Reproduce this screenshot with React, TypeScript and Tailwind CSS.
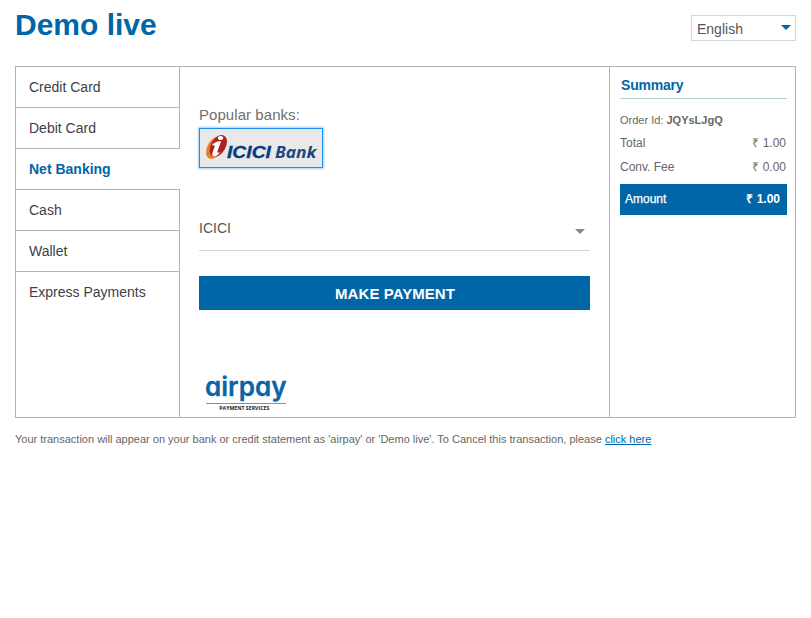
const methods = ['Credit Card', 'Debit Card', 'Net Banking', 'Cash', 'Wallet', 'Express Payments'];

function BankLogo() {
  return (
    <svg width="122" height="38" viewBox="0 0 122 38" className="block">
      <g transform="rotate(30 17 18)">
        <ellipse cx="15.6" cy="19.6" rx="7.6" ry="12.2" fill="#ee7d24" />
        <ellipse cx="17.6" cy="16.4" rx="7.4" ry="11.8" fill="#ae2226" />
      </g>
      <ellipse cx="20.6" cy="9" rx="2.7" ry="2.1" fill="#fff" />
      <path d="M11.8 16.2 Q15.5 12 21 12.4 L17.4 22.5 Q17 24.8 20 23 Q17 28 13.8 27.4 Q11.4 26.7 12.6 23.5 L15 16.6 Z" fill="#fff" />
      <text x="27" y="29.4" fontFamily="Liberation Sans, Arial, sans-serif" fontSize="16" fontWeight="700" fontStyle="italic" fill="#053c7d" stroke="#053c7d" strokeWidth="0.3" textLength="44" lengthAdjust="spacingAndGlyphs">ICICI</text>
      <text x="75" y="29.2" fontFamily="Open Sans, sans-serif" fontSize="15.5" fontWeight="700" fontStyle="italic" fill="#1a4682" textLength="41.5" lengthAdjust="spacingAndGlyphs">Bank</text>
    </svg>
  );
}

function AirpayLogo() {
  return (
    <svg width="84" height="46" viewBox="0 0 84 46" className="block overflow-visible">
      <text x="0" y="25.5" fontFamily="Inter, sans-serif" fontSize="26" fontWeight="600" fill="#0765a8" stroke="#0765a8" strokeWidth="0.3" textLength="81.5" lengthAdjust="spacingAndGlyphs" className="[font-feature-settings:'cv11']">airpay</text>
      <path d="M1 33.5H81" stroke="#8c8c8c" />
      <text x="14.3" y="40.3" fontFamily="Open Sans, sans-serif" fontSize="5.6" fontWeight="700" fill="#222" textLength="50" lengthAdjust="spacingAndGlyphs">PAYMENT SERVICES</text>
    </svg>
  );
}

export default function App() {
  return (
    <div className="min-h-[618px] bg-white pr-[15px] pl-[15px] font-['Liberation_Sans',Arial,sans-serif] text-[#666]">
      <header className="flex h-[66px] items-start justify-between">
        <h1 className="mt-2 text-[30px] leading-[34px] font-bold text-[#0066a7]">Demo live</h1>
        <button className="mt-[15px] flex h-[26px] w-[105px] items-center justify-between border border-[#cfdadf] pt-0.5 pr-1 pl-[5px] text-sm leading-5 text-[#555]">
          English
          <svg width="10" height="5" viewBox="0 0 10 5" className="-mt-[3px]"><path d="M0 0H10L5 5Z" fill="#0066a7" /></svg>
        </button>
      </header>

      <main className="flex h-[352px] border border-[#b3b3b3]">
        <nav className="flex w-[164px] shrink-0 flex-col text-sm text-[#404048]">
          {methods.map((name) => (
            <div
              key={name}
              className={
                name === 'Net Banking'
                  ? 'h-[41px] border-b border-[#b3b3b3] pl-[13px] leading-10 font-bold text-[#0066a7]'
                  : name === 'Express Payments'
                    ? 'grow border-r border-[#b3b3b3] pl-[13px] leading-10'
                    : 'h-[41px] border-r border-b border-[#b3b3b3] pl-[13px] leading-10'
              }
            >
              {name}
            </div>
          ))}
        </nav>

        <section className="flex w-[429px] shrink-0 flex-col pr-[19px] pl-[19px]">
          <h2 className="mt-[38px] text-[15px] leading-5 tracking-[0.06px] text-[#707070]">Popular banks:</h2>
          <button className="mt-[3px] h-10 w-[124px] border border-[#1c8ef0] bg-[#e9e9e9] shadow-[0_0_2px_1px_#9fd0f8]">
            <BankLogo />
          </button>
          <div className="mt-[38px] flex h-[45px] items-start justify-between border-b border-[#cfd8dc] pr-[5px] text-sm leading-5 text-[#555]">
            <span className="mt-3">ICICI</span>
            <svg width="10" height="5" viewBox="0 0 10 5" className="mt-[23px]"><path d="M0 0H10L5 5Z" fill="#7f8c8f" /></svg>
          </div>
          <button className="mt-[25px] h-[34px] bg-[#0066a7] pt-px pl-px text-[15px] leading-5 font-bold tracking-[0.06px] text-white">MAKE PAYMENT</button>
          <div className="mt-[60px] ml-1.5"><AirpayLogo /></div>
        </section>

        <aside className="grow border-l border-[#b3b3b3] pr-2 pl-2.5 text-xs">
          <h2 className="h-8 border-b border-[#b8cdd2] pt-2 pl-px text-sm leading-5 font-bold tracking-[-0.2px] text-[#0066a7]">Summary</h2>
          <p className="mt-[13px] text-[11px] leading-4">Order Id: <b>JQYsLJgQ</b></p>
          <div className="mt-[7px] flex justify-between pr-px leading-4"><span>Total</span><span>₹ 1.00</span></div>
          <div className="mt-2 flex justify-between pr-px leading-4"><span>Conv. Fee</span><span>₹ 0.00</span></div>
          <div className="mt-[9px] flex h-[31px] items-center justify-between bg-[#0066a7] pr-[7px] pb-0.5 pl-[5px] text-white"><span className="[-webkit-text-stroke:0.25px_white]">Amount</span><b>₹ 1.00</b></div>
        </aside>
      </main>
      <p className="mt-[13px] text-[11px] leading-4">
        Your transaction will appear on your bank or credit statement as 'airpay' or 'Demo live'. To Cancel this transaction, please <a className="text-[#0066a7] underline">click here</a>
      </p>
    </div>
  );
}
